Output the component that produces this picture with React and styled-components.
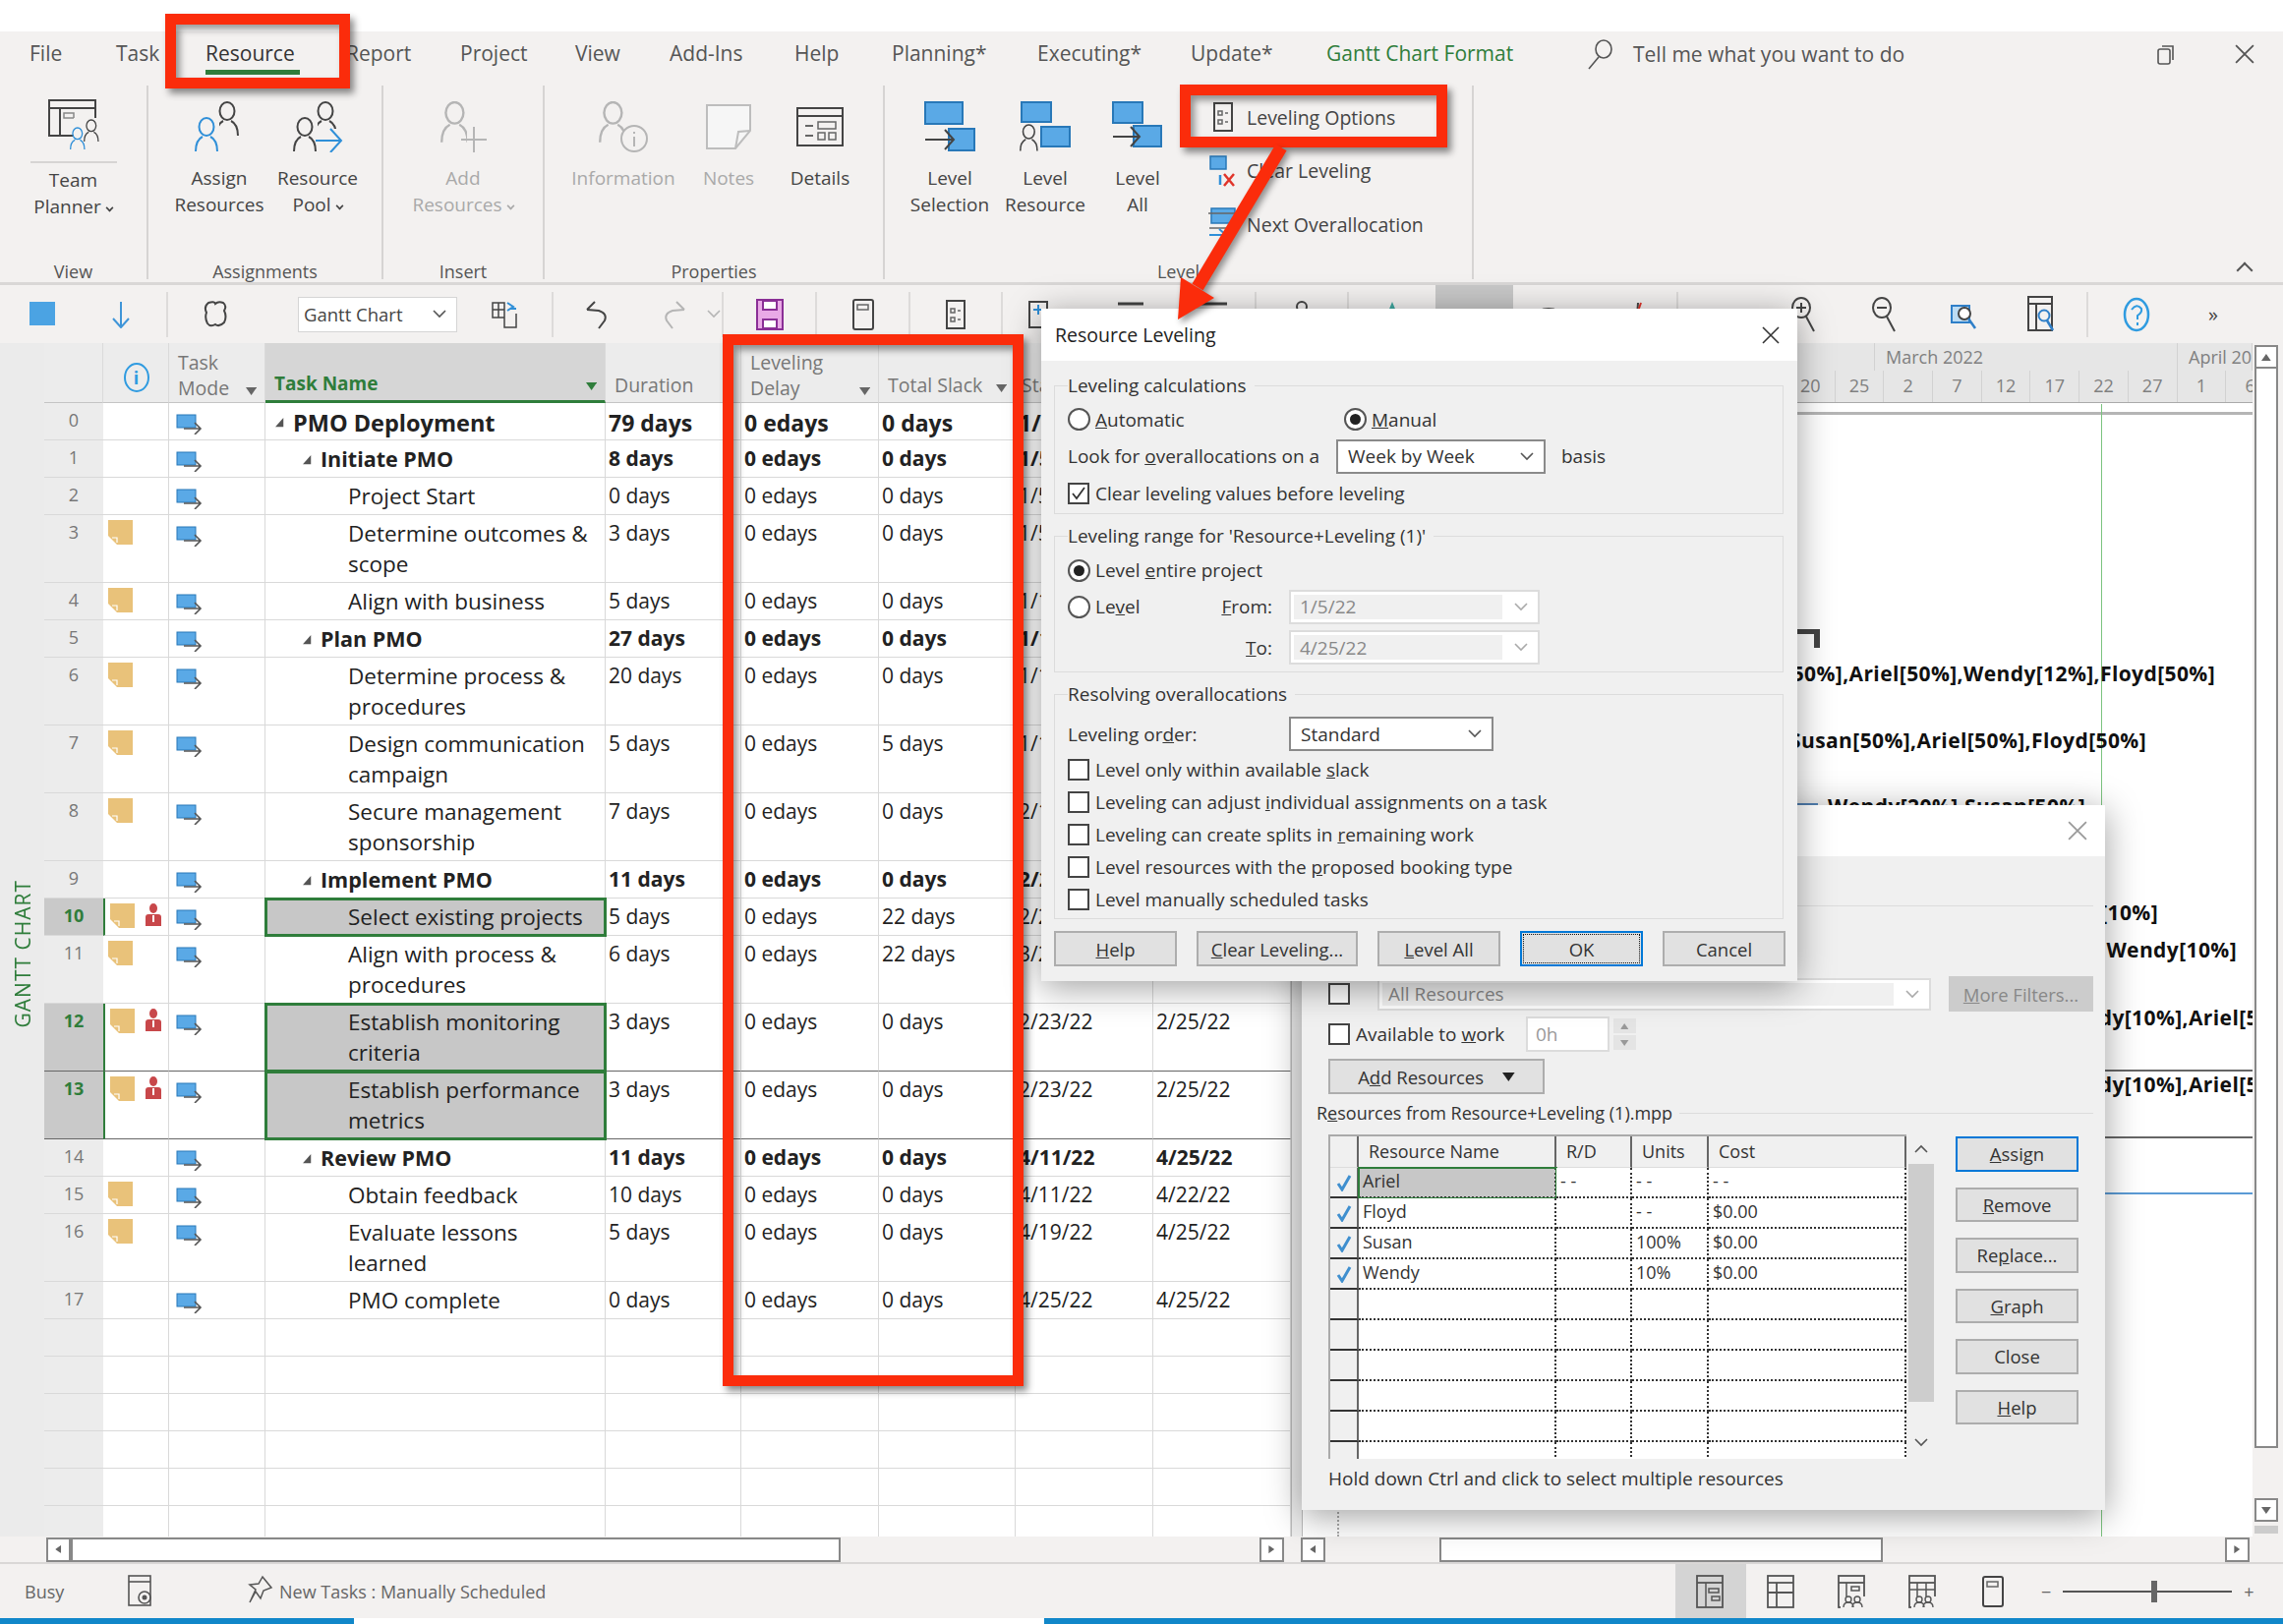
import React from 'react';
import styled, { createGlobalStyle } from 'styled-components';

const GlobalStyle = createGlobalStyle`
    html, body {
        margin: 0;
        padding: 0;
        background: #fff;
    }
    * {
        box-sizing: border-box;
    }
    body {
        font-family: 'Open Sans', 'Noto Sans', sans-serif;
        color: #444;
    }
`;

const GREEN = '#2f7d3b';
const RED = '#fb2c0b';
const BLUE = '#5aa9e6';
const LINE = '#444';

// ---------- icons ----------
const Svg = ({ w = 52, h = 52, children, box }) => (
    <svg width={w} height={h} viewBox={box || `0 0 ${w} ${h}`} fill='none' style={{ display: 'block', flex: 'none' }}>
        {children}
    </svg>
);

const Person = ({ x, y, s = 1, c = LINE, w = 2 }) => (
    <g transform={`translate(${x} ${y}) scale(${s})`} stroke={c} strokeWidth={w} fill='none'>
        <ellipse cx='12' cy='9' rx='7.5' ry='9' />
        <path d='M1 34c0-9 3-13 7-15M23 34c0-9-3-13-7-15' />
    </g>
);

const TeamPlannerIcon = () => (
    <Svg>
        <rect x='1' y='2' width='47' height='36' stroke={LINE} strokeWidth='2' />
        <path d='M1 10h47M12 10v28' stroke={LINE} strokeWidth='2' />
        <rect x='16' y='15' width='10' height='5' stroke='#888' strokeWidth='1.5' />
        <rect x='27' y='24' width='8' height='5' stroke='#888' strokeWidth='1.5' />
        <rect x='26' y='20' width='26' height='32' fill='#f3f1f0' stroke='none' />
        <Person x={36} y={22} s={0.65} />
        <Person x={22} y={30} s={0.65} c='#2f8fd8' />
    </Svg>
);

const AssignIcon = () => (
    <Svg>
        <Person x={22} y={1} />
        <rect x='0' y='14' width='26' height='38' fill='#f3f1f0' />
        <Person x={1} y={17} c='#2f8fd8' />
    </Svg>
);

const PoolIcon = () => (
    <Svg>
        <Person x={22} y={1} />
        <rect x='0' y='14' width='26' height='38' fill='#f3f1f0' />
        <Person x={1} y={17} />
        <rect x='26' y='28' width='26' height='24' fill='#f3f1f0' />
        <path d='M24 40h26M39 28l11 12-11 12' stroke='#2f8fd8' strokeWidth='2' />
    </Svg>
);

const AddResIcon = () => (
    <Svg>
        <Person x={3} y={1} s={1.2} c='#b5b5b5' />
        <rect x='30' y='28' width='20' height='24' fill='#f3f1f0' />
        <path d='M24 39h26M37 26v26' stroke='#b5b5b5' strokeWidth='2' />
    </Svg>
);

const InfoIcon = () => (
    <Svg>
        <Person x={1} y={1} s={1.2} c='#b5b5b5' />
        <circle cx='37' cy='38' r='13' fill='#f3f1f0' stroke='#b5b5b5' strokeWidth='2' />
        <path d='M37 36v10M37 31v2' stroke='#b5b5b5' strokeWidth='2' />
    </Svg>
);

const NotesIcon = () => (
    <Svg w={46} h={46}>
        <path d='M1 1h44v26L30 45H1z' fill='#f6f6f6' stroke='#bdbdbd' strokeWidth='2' />
        <path d='M30 45l3-17 12-1' stroke='#bdbdbd' strokeWidth='2' />
    </Svg>
);

const DetailsIcon = () => (
    <Svg w={48} h={40}>
        <rect x='1' y='1' width='46' height='38' stroke={LINE} strokeWidth='2' />
        <path d='M1 9h46' stroke={LINE} strokeWidth='2' />
        <path d='M9 19h8M9 29h8' stroke='#666' strokeWidth='2' />
        <rect x='22' y='15' width='18' height='7' stroke='#666' strokeWidth='1.5' />
        <rect x='22' y='26' width='7' height='7' stroke='#666' strokeWidth='1.5' />
        <rect x='33' y='26' width='7' height='7' stroke='#666' strokeWidth='1.5' />
    </Svg>
);

const LevelSelIcon = () => (
    <Svg>
        <rect x='1' y='1' width='38' height='22' fill={BLUE} stroke='#2878b8' strokeWidth='2' />
        <rect x='25' y='28' width='26' height='22' fill={BLUE} stroke='#2878b8' strokeWidth='2' />
        <path d='M1 39h28M21 29l9 10-9 10' stroke={LINE} strokeWidth='2' />
    </Svg>
);

const LevelResIcon = () => (
    <Svg>
        <rect x='2' y='1' width='30' height='20' fill={BLUE} stroke='#2878b8' strokeWidth='2' />
        <rect x='22' y='26' width='29' height='20' fill={BLUE} stroke='#2878b8' strokeWidth='2' />
        <Person x={0} y={24} s={0.78} />
    </Svg>
);

const LevelAllIcon = () => (
    <Svg>
        <rect x='1' y='1' width='30' height='21' fill={BLUE} stroke='#2878b8' strokeWidth='2' />
        <rect x='22' y='25' width='28' height='21' fill={BLUE} stroke='#2878b8' strokeWidth='2' />
        <path d='M1 36h26M19 26l9 10-9 10' stroke={LINE} strokeWidth='2' />
    </Svg>
);

const OptionsIcon = () => (
    <Svg w={22} h={30}>
        <rect x='2' y='1' width='18' height='28' stroke={LINE} strokeWidth='2' />
        <path d='M6 9h4v4H6zM6 18h4v4H6zM13 11h3M13 20h3' stroke='#666' strokeWidth='1.5' />
    </Svg>
);

const ClearIcon = () => (
    <Svg w={28} h={32}>
        <rect x='1' y='1' width='16' height='13' fill={BLUE} stroke='#2878b8' strokeWidth='1.5' />
        <path d='M11 20v10' stroke='#2f8fd8' strokeWidth='2.5' />
        <path d='M15 19l10 12M25 19L15 31' stroke='#e0342a' strokeWidth='2.5' />
    </Svg>
);

const NextIcon = () => (
    <Svg w={30} h={34}>
        <rect x='3' y='1' width='24' height='15' fill={BLUE} stroke='#2878b8' strokeWidth='1.5' />
        <path d='M0 6h30M1 21h27' stroke='#666' strokeWidth='1.5' />
        <path d='M1 28h16M11 22l7 6-7 6' stroke='#2f8fd8' strokeWidth='2' />
    </Svg>
);

const TaskModeIcon = () => (
    <Svg w={27} h={21}>
        <rect x='1' y='1' width='19' height='13' fill={BLUE} stroke='#2878b8' />
        <path d='M8 15h17M19 9l6 6-6 6' stroke='#555' strokeWidth='1.6' />
    </Svg>
);

const NoteIcon = () => (
    <Svg w={25} h={25}>
        <path d='M0 0h25v25H9L0 16z' fill='#e9c27a' />
        <path d='M4 18h5v5' stroke='#fff' strokeWidth='1.2' />
    </Svg>
);

const RedPersonIcon = () => (
    <Svg w={18} h={23}>
        <ellipse cx='9' cy='5' rx='4' ry='5' fill='#c8474a' />
        <path d='M1 23v-9q0-3 3-3h10q3 0 3 3v9z' fill='#c8474a' />
        <path d='M8 12h2v7H8z' fill='#fff' />
    </Svg>
);

const CheckMark = () => (
    <Svg w={18} h={18}>
        <path d='M3 10l4 6 8-14' stroke='#3f8fcf' strokeWidth='3' />
    </Svg>
);

const Chevron = ({ c = '#555' }) => (
    <Svg w={14} h={9}>
        <path d='M1 1l6 6 6-6' stroke={c} strokeWidth='1.6' />
    </Svg>
);

const Caret = ({ s = 8, c = '#666', dir = 0 }) => (
    <svg
        width={s * 1.4}
        height={s}
        viewBox='0 0 14 10'
        style={{ display: 'block', flex: 'none', transform: `rotate(${dir}deg)` }}
    >
        <path d='M0 0h14L7 10z' fill={c} />
    </svg>
);

const Collapse = () => (
    <svg width='11' height='11' viewBox='0 0 12 12' style={{ display: 'block', flex: 'none' }}>
        <path d='M9 0v10H0z' fill='#555' />
    </svg>
);

const ViewIcon = ({ kind }) => (
    <Svg w={30} h={34}>
        <rect x='1' y='1' width='26' height='32' stroke='#555' strokeWidth='1.8' />
        <path d='M1 8h26' stroke='#555' strokeWidth='1.8' />
        {kind === 'gantt' && <path d='M10 8v25M13 14h10v4H13zM16 22h8v4h-8z' stroke='#555' strokeWidth='1.5' />}
        {kind === 'split' && <path d='M10 8v10M1 18h26M10 18v15' stroke='#555' strokeWidth='1.8' />}
        {kind === 'team' && <path d='M9 8v14M14 12h8v4h-8z' stroke='#555' strokeWidth='1.5' />}
        {kind === 'usage' && <path d='M9 8v14M1 15h26M18 8v14' stroke='#555' strokeWidth='1.5' />}
        {(kind === 'team' || kind === 'usage') && (
            <>
                <rect x='3' y='22' width='26' height='12' fill='#f3f1f0' />
                <circle cx='11' cy='25' r='3' stroke='#555' strokeWidth='1.4' />
                <circle cx='20' cy='25' r='3' stroke='#555' strokeWidth='1.4' />
                <path d='M6 33q0-5 5-5t5 5M15 33q0-5 5-5t5 5' stroke='#555' strokeWidth='1.4' />
            </>
        )}
    </Svg>
);

const Q = {
    square: <Svg w={26} h={26}><rect width='26' height='24' fill='#4ba3e3' /></Svg>,
    down: <Svg w={22} h={28}><path d='M11 1v26M3 18l8 9 8-9' stroke='#3f95d8' strokeWidth='2' /></Svg>,
    link: <Svg w={30} h={28}><path d='M8 2q6-2 7 1 3-3 8-1 4 3 1 8 3 6 0 12-5 5-9 2-5 3-8-1-3-6-1-11-3-6 2-10z' stroke={LINE} strokeWidth='2' /></Svg>,
    split: <Svg w={28} h={28}><path d='M2 2h12v15H2zM2 9h12M8 2v15M14 17v10h12V13' stroke={LINE} strokeWidth='1.5' /><path d='M17 2l6 4-6 4M26 8h-6' stroke='#2f8fd8' strokeWidth='2' /></Svg>,
    undo: <Svg w={26} h={30}><path d='M2 10l8-8M2 10l12 1q9 3 6 10l-6 8' stroke={LINE} strokeWidth='2' /></Svg>,
    redo: <Svg w={26} h={30}><path d='M24 10l-8-8M24 10L12 11q-9 3-6 10l6 8' stroke='#b5b5b5' strokeWidth='2' /></Svg>,
    chev: <Chevron c='#b5b5b5' />,
    save: <Svg w={28} h={32}><rect x='1' y='1' width='26' height='30' fill='#e9a9e6' stroke='#8a2f96' strokeWidth='2' /><rect x='7' y='2' width='14' height='9' fill='#fff' stroke='#8a2f96' strokeWidth='2' /><rect x='7' y='21' width='14' height='9' fill='#fff' stroke='#8a2f96' strokeWidth='2' /></Svg>,
    doc: <Svg w={24} h={32}><rect x='2' y='1' width='20' height='30' rx='2' stroke={LINE} strokeWidth='2' /><rect x='6' y='6' width='11' height='5' stroke='#666' strokeWidth='1.5' /></Svg>,
    opts: <OptionsIcon />,
    plus: <Svg w={22} h={30}><rect x='2' y='2' width='18' height='26' stroke={LINE} strokeWidth='2' /><path d='M11 5v10M6 10h10' stroke='#2f8fd8' strokeWidth='2' /></Svg>,
    dash: <Svg w={26} h={28}><path d='M0 3h26' stroke={LINE} strokeWidth='3' /></Svg>,
    person: <Svg w={26} h={28}><circle cx='13' cy='6' r='5' stroke={LINE} strokeWidth='2' /></Svg>,
    tri: <Svg w={24} h={28}><path d='M12 1l5 12H7z' fill='#3fa8a0' /></Svg>,
    bar: <Svg w={34} h={28}><path d='M0 14h34' stroke='#2f7fc8' strokeWidth='4' /></Svg>,
    arc: <Svg w={28} h={28}><path d='M3 16q0-8 11-8t11 8' stroke={LINE} strokeWidth='2' /></Svg>,
    mark: <Svg w={34} h={28}><path d='M2 16q0-6 8-6h14M25 2l-1 14' stroke={LINE} strokeWidth='2' /><path d='M28 2l-5 14' stroke='#e0342a' strokeWidth='2' /></Svg>,
    dbl: <Svg w={34} h={28}><path d='M1 12h14M20 12h14' stroke='#2f7fc8' strokeWidth='4' /></Svg>,
    zin: <Svg w={26} h={38}><ellipse cx='11' cy='12' rx='9' ry='10' stroke={LINE} strokeWidth='2' /><path d='M6 12h10M11 7v10M16 21l8 15' stroke={LINE} strokeWidth='2' /></Svg>,
    zout: <Svg w={26} h={38}><ellipse cx='11' cy='12' rx='9' ry='10' stroke={LINE} strokeWidth='2' /><path d='M6 12h10M16 21l8 15' stroke={LINE} strokeWidth='2' /></Svg>,
    fit: <Svg w={28} h={32}><rect x='1' y='7' width='18' height='17' fill='#bcdcf4' stroke='#2f7fc8' strokeWidth='2' /><circle cx='14' cy='15' r='6' fill='#fff' stroke={LINE} strokeWidth='2' /><path d='M18 20l7 10' stroke='#2f7fc8' strokeWidth='2.5' /></Svg>,
    table: <Svg w={28} h={38}><rect x='1' y='1' width='24' height='34' stroke={LINE} strokeWidth='2' /><path d='M1 8h24M9 8v27' stroke={LINE} strokeWidth='2' /><circle cx='17' cy='20' r='5.5' fill='#f3f1f0' stroke='#2f7fc8' strokeWidth='2' /><path d='M20 25l6 10' stroke='#2f7fc8' strokeWidth='2.5' /></Svg>,
    help: <Svg w={28} h={36}><ellipse cx='14' cy='18' rx='12' ry='16' stroke='#2f9be0' strokeWidth='2.5' /><path d='M9 13q5-7 10-1 1 4-4 7v4M15 26v3' stroke='#2f9be0' strokeWidth='2' /></Svg>,
};

// ---------- shell ----------
const Page = styled.div`
    position: relative;
    width: 2322px;
    height: 1652px;
    overflow: hidden;
    background: #fff;
    display: flex;
    flex-direction: column;
`;

const TopBand = styled.div`
    height: 32px;
    flex: none;
`;

const TabRow = styled.div`
    height: 52px;
    flex: none;
    display: flex;
    align-items: flex-start;
    padding: 7px 0 0 30px;
    background: #f3f1f0;
    font-size: 21px;
    line-height: 30px;
    color: #555;
`;

const Tab = styled.div`
    width: ${(p) => p.$w}px;
    flex: none;
    position: relative;
    color: ${(p) => (p.$format ? GREEN : p.$active ? '#333' : '#555')};

    ${(p) =>
        p.$active &&
        `&::after {
            content: '';
            position: absolute;
            left: 0;
            top: 32px;
            width: 96px;
            height: 5px;
            background: ${GREEN};
        }`}
`;

const SearchBox = styled.div`
    display: flex;
    align-items: center;
    gap: 20px;
    width: 550px;
    flex: none;
    color: #555;
`;

const WindowBtn = styled.div`
    width: 80px;
    flex: none;
    display: flex;
    justify-content: center;
    padding-top: 6px;
`;

const Ribbon = styled.div`
    height: 206px;
    flex: none;
    display: flex;
    background: #f3f1f0;
    border-bottom: 3px solid #d9d7d6;
    padding-top: 3px;
    position: relative;
`;

const Group = styled.div`
    width: ${(p) => p.$w}px;
    flex: none;
    height: 197px;
    display: flex;
    flex-direction: column;
    border-right: 2px solid #d6d4d3;
`;

const GroupBody = styled.div`
    flex: 1;
    display: flex;
    padding-left: ${(p) => p.$pad || 0}px;
`;

const GroupLabel = styled.div`
    height: 26px;
    margin-bottom: -5px;
    text-align: center;
    font-size: 18px;
    line-height: 26px;
    color: #555;
`;

const BigButton = styled.div`
    width: ${(p) => p.$w || 100}px;
    flex: ${(p) => (p.$w ? 'none' : 1)};
    display: flex;
    flex-direction: column;
    align-items: center;
    padding-top: 12px;
    font-size: 19px;
    line-height: 27px;
    text-align: center;
    color: ${(p) => (p.$off ? '#a9a9a9' : '#444')};
    white-space: nowrap;
`;

const IconSlot = styled.div`
    height: ${(p) => p.$h || 60}px;
    margin-bottom: 9px;
    display: flex;
    align-items: center;
    justify-content: center;
    flex: none;
`;

const PlannerRule = styled.div`
    width: 88px;
    height: 2px;
    background: #d6d4d3;
    margin: 3px 0 4px;
    flex: none;
`;

const TinyCaret = styled.span`
    display: inline-block;
    margin-left: 5px;
    vertical-align: 2px;
    width: 7px;
    height: 7px;
    border-right: 2px solid currentColor;
    border-bottom: 2px solid currentColor;
    transform: rotate(45deg) scale(0.8);
`;

const SmallList = styled.div`
    display: flex;
    flex-direction: column;
    margin-left: 21px;
    padding-top: 5px;
`;

const SmallItem = styled.div`
    height: 54.5px;
    display: flex;
    align-items: center;
    gap: 9px;
    font-size: 19.5px;
    white-space: nowrap;
`;

const SmallSlot = styled.div`
    width: 30px;
    display: flex;
    justify-content: center;
    flex: none;
`;

const CollapseSlot = styled.div`
    position: absolute;
    right: 32px;
    bottom: 8px;
    width: 16px;
    height: 16px;
    &::after {
        content: '';
        position: absolute;
        left: 3px;
        top: 6px;
        width: 10px;
        height: 10px;
        border-left: 2px solid #555;
        border-top: 2px solid #555;
        transform: rotate(45deg);
    }
`;

const QatRow = styled.div`
    height: 59px;
    flex: none;
    display: flex;
    align-items: center;
    background: #f3f1f0;
    font-size: 20px;
`;

const QatSlot = styled.div`
    width: ${(p) => p.$w}px;
    height: 100%;
    flex: none;
    display: flex;
    align-items: center;
    justify-content: center;
    background: ${(p) => (p.$on ? '#c8c8c8' : 'transparent')};
`;

const QatSep = styled.div`
    width: ${(p) => p.$w}px;
    height: 46px;
    flex: none;
    border-right: 2px solid #dddbda;
`;

const ViewCombo = styled.div`
    width: 162px;
    height: 36px;
    flex: none;
    margin: 0 0 0 37px;
    background: #fff;
    border: 1px solid #d5d5d5;
    display: flex;
    align-items: center;
    justify-content: space-between;
    padding: 0 10px 0 5px;
    font-size: 18.5px;
    color: #444;
`;

// ---------- main area ----------
const Main = styled.div`
    height: 1214px;
    flex: none;
    display: flex;
    background: #fff;
`;

const ViewBar = styled.div`
    width: 45px;
    flex: none;
    background: #ebebeb;
    position: relative;
`;

const ViewBarText = styled.div`
    position: absolute;
    left: 8px;
    top: 546px;
    writing-mode: vertical-rl;
    transform: rotate(180deg);
    font-size: 21px;
    letter-spacing: 1px;
    color: ${GREEN};
    white-space: nowrap;
    line-height: 30px;
`;

const Sheet = styled.div`
    width: 1268px;
    flex: none;
    overflow: hidden;
    display: flex;
    flex-direction: column;
`;

const Row = styled.div`
    display: grid;
    grid-template-columns: 60px 67px 98px 346px 138px 140px 139px 140px 140px;
    height: ${(p) => p.$h}px;
    flex: none;
    font-size: ${(p) => (p.$big ? 23 : 21)}px;
    font-weight: ${(p) => (p.$bold ? 700 : 400)};
    line-height: 31px;
    color: #222;
`;

const Cell = styled.div`
    border-bottom: 1px solid ${(p) => (p.$dark ? '#666' : '#d9d9d9')};
    border-right: 1px solid #d9d9d9;
    padding: ${(p) => (p.$big ? 5 : 3)}px 4px 0 3px;
    white-space: nowrap;
    overflow: hidden;
    position: relative;
`;

const IdCell = styled(Cell)`
    background: ${(p) => (p.$sel ? '#c9c9c9' : '#ececec')};
    color: ${(p) => (p.$sel ? GREEN : '#777')};
    font-size: 18px;
    font-weight: ${(p) => (p.$sel ? 700 : 400)};
    text-align: center;
    padding: 0;
    line-height: 34px;
    border-right: none;
`;

const InfoCell = styled(Cell)`
    display: flex;
    gap: 10px;
    padding: 5px 0 0 5px;
    border-left: ${(p) => (p.$sel ? `2px solid ${GREEN}` : 'none')};
`;

const ModeCell = styled(Cell)`
    padding: 11px 0 0 7px;
`;

const NameCell = styled(Cell)`
    padding-left: ${(p) => 28 + p.$lvl * 28}px;
    padding-right: 10px;
    font-size: ${(p) => (p.$big ? 23.5 : p.$bold ? 21.5 : 22.5)}px;
    white-space: normal;
    overflow: visible;
    z-index: ${(p) => (p.$sel ? 2 : 0)};
    background: ${(p) => (p.$sel ? '#c7c7c7' : 'transparent')};
    outline: ${(p) => (p.$sel ? `3px solid ${GREEN}` : 'none')};
    outline-offset: -2px;
`;

const Twist = styled.span`
    position: absolute;
    left: ${(p) => 10 + p.$lvl * 28}px;
    top: 15px;
`;

const HeadRow = styled(Row)`
    height: 61px;
    font-size: 19.5px;
    line-height: 26px;
    color: #777;
`;

const HeadCell = styled.div`
    background: ${(p) => (p.$on ? '#d6d6d6' : '#ececec')};
    color: ${(p) => (p.$on ? GREEN : '#777')};
    font-weight: ${(p) => (p.$on ? 700 : 400)};
    font-size: ${(p) => (p.$on ? 19 : 19.5)}px;
    border-right: 1px solid #dadada;
    border-bottom: ${(p) => (p.$on ? `3px solid ${GREEN}` : '1px solid #c4c4c4')};
    display: flex;
    align-items: flex-end;
    justify-content: space-between;
    padding: 0 8px ${(p) => (p.$two ? 1 : 4)}px ${(p) => p.$pl || 9}px;
    white-space: nowrap;
`;

const HeadCaret = styled.span`
    padding-bottom: 6px;
`;

const InfoDot = styled.div`
    width: 26px;
    height: 30px;
    border: 2px solid #2f9be0;
    border-radius: 50%;
    color: #2f9be0;
    font-size: 18px;
    font-weight: 700;
    line-height: 26px;
    text-align: center;
    margin: 0 auto 6px;
`;

const Splitter = styled.div`
    width: 12px;
    flex: none;
    background: #ececec;
    border-left: 1px solid #bbb;
    border-right: 1px solid #bbb;
`;

const Chart = styled.div`
    width: 966px;
    flex: none;
    position: relative;
    overflow: hidden;
`;

const ScaleTop = styled.div`
    height: 28px;
    display: flex;
    background: #e6e6e6;
    font-size: 18px;
    line-height: 28px;
    color: #808080;
    white-space: nowrap;
`;

const Month = styled.div`
    width: ${(p) => p.$w}px;
    flex: none;
    padding-left: 11px;
    border-right: 1px solid #d2d2d2;
    overflow: hidden;
`;

const ScaleBottom = styled.div`
    height: 33px;
    display: flex;
    padding-left: 492px;
    background: #e6e6e6;
    border-bottom: 1px solid #aaa;
    font-size: 18px;
    line-height: 30px;
    color: #808080;
`;

const Tick = styled.div`
    width: 49.7px;
    flex: none;
    text-align: center;
    border-right: 1px solid #d2d2d2;
    border-top: none;
`;

const ScaleRule = styled.div`
    height: 12px;
    border-bottom: 3px solid #b5b5b5;
`;

const TodayLine = styled.div`
    position: absolute;
    left: 812px;
    top: 62px;
    bottom: 0;
    width: 1px;
    background: #7cc47f;
`;

const DottedLine = styled.div`
    position: absolute;
    left: 35px;
    top: 62px;
    bottom: 0;
    border-left: 2px dotted #aaa;
`;

const ChartRule = styled.div`
    position: absolute;
    left: 0;
    right: 0;
    top: ${(p) => p.$y}px;
    height: 2px;
    background: ${(p) => p.$c || '#666'};
`;

const BarLabel = styled.div`
    position: absolute;
    top: ${(p) => p.$y}px;
    ${(p) => (p.$right !== undefined ? `right: ${p.$right}px;` : `left: ${p.$left}px;`)}
    font-size: 21px;
    font-weight: 700;
    line-height: 28px;
    letter-spacing: 0.4px;
    color: #111;
    white-space: nowrap;
`;

const SummaryEnd = styled.div`
    position: absolute;
    left: 490px;
    top: 291px;
    width: 36px;
    height: 19px;
    border-top: 5px solid #444;
    border-right: 6px solid #444;
`;

const BlueStub = styled.div`
    position: absolute;
    left: 500px;
    top: 468px;
    width: 24px;
    height: 3px;
    background: #5b8fc7;
`;

const VScroll = styled.div`
    width: 31px;
    flex: none;
    padding: 2px 5px 0 2px;
    display: flex;
    flex-direction: column;
    background: #f3f1f0;
`;

const ArrowBox = styled.div`
    height: 24px;
    flex: none;
    background: #fff;
    border: 2px solid #888;
    display: flex;
    align-items: center;
    justify-content: center;
`;

const VThumb = styled.div`
    height: 1098px;
    flex: none;
    background: #fff;
    border: 2px solid #888;
    border-top: none;
    margin-bottom: 51px;
`;

const Grip = styled.div`
    height: 8px;
    margin-top: 4px;
    background: #ccc;
`;

const ScrollRow = styled.div`
    height: 28px;
    flex: none;
    display: flex;
    align-items: center;
    background: #f3f1f0;
    border-bottom: 2px solid #d9d7d6;
`;

const ScrollBar = styled.div`
    width: ${(p) => p.$w}px;
    margin-left: ${(p) => p.$ml || 0}px;
    height: 25px;
    flex: none;
    display: flex;
    align-items: stretch;
`;

const ScrollBtn = styled.div`
    width: 25px;
    flex: none;
    background: #fff;
    border: 2px solid #888;
    display: flex;
    align-items: center;
    justify-content: center;
`;

const Thumb = styled.div`
    width: ${(p) => p.$w}px;
    margin-left: ${(p) => p.$ml || 0}px;
    flex: none;
    background: #fff;
    border: 2px solid #888;
`;

const Spring = styled.div`
    flex: 1;
`;

const StatusBar = styled.div`
    height: 55px;
    flex: none;
    display: flex;
    align-items: center;
    background: #f3f1f0;
    font-size: 18px;
    color: #666;
`;

const StatusCell = styled.div`
    width: ${(p) => p.$w}px;
    height: 100%;
    flex: none;
    display: flex;
    align-items: center;
    justify-content: ${(p) => (p.$left ? 'flex-start' : 'center')};
    gap: 6px;
    padding-left: ${(p) => p.$pl || 0}px;
    background: ${(p) => (p.$on ? '#d4d4d4' : 'transparent')};
    white-space: nowrap;
`;

const ZoomTrack = styled.div`
    width: 172px;
    height: 2px;
    margin: 0 6px;
    flex: none;
    background: #555;
    position: relative;
`;

const ZoomThumb = styled.div`
    position: absolute;
    left: 90px;
    top: -10px;
    width: 6px;
    height: 22px;
    background: #666;
`;

const TaskStrip = styled.div`
    height: 6px;
    flex: none;
    background: linear-gradient(
        to right,
        #1187c9 0,
        #1187c9 360px,
        #fff 360px,
        #fff 1062px,
        #1187c9 1062px
    );
`;

// ---------- dialogs ----------
const Dialog = styled.div`
    position: absolute;
    left: ${(p) => p.$x}px;
    top: ${(p) => p.$y}px;
    width: ${(p) => p.$w}px;
    height: ${(p) => p.$h}px;
    z-index: ${(p) => p.$z};
    background: #f0f0f0;
    box-shadow: 0 6px 34px rgba(0, 0, 0, 0.38);
    display: flex;
    flex-direction: column;
    font-size: 19px;
    color: #333;
`;

const TitleBar = styled.div`
    height: ${(p) => p.$h}px;
    flex: none;
    background: #fff;
    display: flex;
    align-items: center;
    justify-content: space-between;
    padding: 0 18px 0 14px;
    font-size: 19.5px;
    color: #222;
`;

const DialogBody = styled.div`
    flex: 1;
    padding: 12px 14px 15px 13px;
    display: flex;
    flex-direction: column;
`;

const Fieldset = styled.fieldset`
    margin: 0 0 ${(p) => p.$mb}px;
    padding: ${(p) => p.$pt}px 13px 0;
    min-width: 0;
    height: ${(p) => p.$h}px;
    flex: none;
    border: 1px solid #dcdcdc;
`;

const Legend = styled.legend`
    margin-left: 0;
    padding: 0 8px 0 0;
    line-height: 26px;
`;

const Line = styled.div`
    height: ${(p) => p.$h}px;
    flex: none;
    display: flex;
    align-items: center;
    white-space: nowrap;
    margin-top: ${(p) => p.$mt || 0}px;
`;

const Radio = styled.span`
    width: 23px;
    height: 23px;
    flex: none;
    border-radius: 50%;
    border: 2px solid #555;
    background: #fff;
    margin-right: 5px;
    position: relative;
    ${(p) =>
        p.$on &&
        `&::after {
            content: '';
            position: absolute;
            left: 4px;
            top: 4px;
            width: 11px;
            height: 11px;
            border-radius: 50%;
            background: #222;
        }`}
`;

const Box = styled.span`
    width: 22px;
    height: 22px;
    flex: none;
    border: 2px solid #444;
    background: #fff;
    margin-right: 6px;
    display: flex;
    align-items: center;
    justify-content: center;
`;

const Tickmark = () => (
    <Svg w={16} h={16}>
        <path d='M2 8l4 5 8-11' stroke='#333' strokeWidth='1.8' />
    </Svg>
);

const LeftCol = styled.div`
    width: ${(p) => p.$w}px;
    flex: none;
    display: flex;
    align-items: center;
    justify-content: ${(p) => (p.$end ? 'flex-end' : 'flex-start')};
    padding-right: ${(p) => (p.$end ? 17 : 0)}px;
    padding-left: ${(p) => p.$pl || 0}px;
`;

const Select = styled.div`
    width: ${(p) => p.$w}px;
    height: ${(p) => p.$h || 35}px;
    flex: none;
    border: ${(p) => (p.$off ? '2px solid #dcdcdc' : '2px solid #8a8a8a')};
    background: #fff;
    display: flex;
    align-items: center;
    justify-content: space-between;
    padding: ${(p) => (p.$off ? '3px 10px 3px 3px' : '0 10px 0 10px')};
    color: ${(p) => (p.$off ? '#888' : '#333')};
`;

const SelectText = styled.div`
    flex: 1;
    height: 100%;
    display: flex;
    align-items: center;
    margin-right: 12px;
    padding-left: ${(p) => (p.$off ? 6 : 0)}px;
    background: ${(p) => (p.$off ? '#f0f0f0' : 'transparent')};
`;

const ButtonRow = styled.div`
    display: flex;
    gap: 20px;
    justify-content: space-between;
`;

const DlgButton = styled.div`
    width: ${(p) => p.$w || 125}px;
    height: 36px;
    flex: none;
    font-size: 18.5px;
    background: ${(p) => (p.$off ? '#ccc' : '#e1e1e1')};
    border: 2px solid ${(p) => (p.$primary ? '#0078d7' : p.$off ? '#ccc' : '#adadad')};
    display: flex;
    align-items: center;
    justify-content: center;
    color: ${(p) => (p.$off ? '#888' : '#333')};
    ${(p) => p.$focus && 'outline: 1px dotted #111; outline-offset: -4px;'}
`;

const BodyTwo = styled.div`
    flex: 1;
    padding: 50px 12px 0 27px;
    display: flex;
    flex-direction: column;
`;

const Rule = styled.div`
    height: 1px;
    background: #dcdcdc;
    flex: none;
    margin-bottom: 71px;
`;

const SpinInput = styled.div`
    width: 85px;
    height: 36px;
    flex: none;
    background: #fff;
    border: 2px solid #dcdcdc;
    padding-left: 8px;
    line-height: 32px;
    color: #999;
`;

const Spin = styled.div`
    width: 23px;
    flex: none;
    margin-left: 4px;
    display: flex;
    flex-direction: column;
    gap: 2px;
`;

const SpinPart = styled.div`
    height: 15px;
    background: #e4e4e4;
    display: flex;
    align-items: center;
    justify-content: center;
`;

const LabelRule = styled.div`
    display: flex;
    align-items: center;
    gap: 7px;
    height: 30px;
    margin: 4px 0 7px -12px;
    white-space: nowrap;
    font-size: 18px;
    &::after {
        content: '';
        flex: 1;
        height: 1px;
        background: #dcdcdc;
    }
`;

const PickerWrap = styled.div`
    display: flex;
    height: 330px;
    flex: none;
`;

const Picker = styled.div`
    width: 588px;
    flex: none;
    position: relative;
    overflow: hidden;
    border-top: 2px solid #aaa;
    border-left: 2px solid #aaa;
    font-size: 18px;
    color: #333;
`;

const PickRow = styled.div`
    display: grid;
    grid-template-columns: 29px 201px 77px 78px 201px;
    height: ${(p) => p.$h || 31}px;
`;

const PickHead = styled.div`
    background: #f0f0f0;
    border-right: 2px solid #666;
    border-bottom: 1px solid #ddd;
    display: flex;
    align-items: flex-end;
    padding: 0 0 2px 10px;
    line-height: 28px;
`;

const PickMark = styled.div`
    background: #f0f0f0;
    border-right: 2px solid #666;
    border-bottom: 2px solid #333;
    display: flex;
    align-items: center;
    justify-content: center;
`;

const PickCell = styled.div`
    background: ${(p) => (p.$on ? '#c7c7c7' : '#fff')};
    border-right: 2px dotted #333;
    border-bottom: 2px dotted #333;
    padding-left: 4px;
    line-height: 26px;
    white-space: nowrap;
    ${(p) => p.$on && `outline: 2px solid ${GREEN}; outline-offset: -1px;`}
`;

const PickScroll = styled.div`
    width: 30px;
    flex: none;
    display: flex;
    flex-direction: column;
    align-items: stretch;
    background: #f0f0f0;
    padding: 0 2px;
`;

const PickScrollEnd = styled.div`
    height: 30px;
    display: flex;
    align-items: center;
    justify-content: center;
    transform: ${(p) => (p.$up ? 'rotate(180deg)' : 'none')};
`;

const PickThumb = styled.div`
    height: 242px;
    background: #cdcdcd;
    flex: none;
    margin-bottom: 26px;
`;

const SideButtons = styled.div`
    display: flex;
    flex-direction: column;
    gap: 16px;
    margin-left: 20px;
    padding-top: 2px;
`;

const SideButton = styled(DlgButton)`
    height: 35.5px;
`;

const Hint = styled.div`
    line-height: 26px;
    margin-top: 7px;
`;

const XMark = ({ c = '#333', s = 18 }) => (
    <svg width={s} height={s} viewBox='0 0 18 18' style={{ display: 'block', flex: 'none' }}>
        <path d='M1 1l16 16M17 1L1 17' stroke={c} strokeWidth='1.6' />
    </svg>
);

// ---------- annotations ----------
const RedBox = styled.div`
    position: absolute;
    left: ${(p) => p.$x}px;
    top: ${(p) => p.$y}px;
    width: ${(p) => p.$w}px;
    height: ${(p) => p.$h}px;
    z-index: 20;
    border: 11px solid ${RED};
    box-shadow: 4px 5px 7px rgba(0, 0, 0, 0.45), inset 4px 5px 7px rgba(0, 0, 0, 0.4);
    pointer-events: none;
`;

const ArrowOverlay = styled.svg`
    position: absolute;
    left: 1180px;
    top: 140px;
    z-index: 21;
    filter: drop-shadow(3px 4px 3px rgba(0, 0, 0, 0.4));
`;

// ---------- data ----------
const TABS = [
    ['File', 88],
    ['Task', 91],
    ['Resource', 143, 'active'],
    ['Report', 116],
    ['Project', 117],
    ['View', 96],
    ['Add-Ins', 127],
    ['Help', 99],
    ['Planning*', 148],
    ['Executing*', 156],
    ['Update*', 138],
    ['Gantt Chart Format', 264, 'format'],
];

const TASKS = [
    { id: 0, lvl: 0, name: 'PMO Deployment', dur: '79 days', slack: '0 days', start: '1/5/22', bold: true, big: true, twist: true },
    { id: 1, lvl: 1, name: 'Initiate PMO', dur: '8 days', slack: '0 days', start: '1/5/22', bold: true, twist: true },
    { id: 2, lvl: 2, name: 'Project Start', dur: '0 days', slack: '0 days', start: '1/5/22' },
    { id: 3, lvl: 2, name: 'Determine outcomes & scope', dur: '3 days', slack: '0 days', start: '1/5/22', tall: true, note: true },
    { id: 4, lvl: 2, name: 'Align with business', dur: '5 days', slack: '0 days', start: '1/10/22', note: true },
    { id: 5, lvl: 1, name: 'Plan PMO', dur: '27 days', slack: '0 days', start: '1/17/22', bold: true, twist: true },
    { id: 6, lvl: 2, name: 'Determine process & procedures', dur: '20 days', slack: '0 days', start: '1/17/22', tall: true, note: true },
    { id: 7, lvl: 2, name: 'Design communication campaign', dur: '5 days', slack: '5 days', start: '1/17/22', tall: true, note: true },
    { id: 8, lvl: 2, name: 'Secure management sponsorship', dur: '7 days', slack: '0 days', start: '2/14/22', tall: true, note: true },
    { id: 9, lvl: 1, name: 'Implement PMO', dur: '11 days', slack: '0 days', start: '2/23/22', bold: true, twist: true },
    { id: 10, lvl: 2, name: 'Select existing projects', dur: '5 days', slack: '22 days', start: '2/23/22', note: true, res: true, sel: true },
    { id: 11, lvl: 2, name: 'Align with process & procedures', dur: '6 days', slack: '22 days', start: '3/2/22', tall: true, note: true },
    { id: 12, lvl: 2, name: 'Establish monitoring criteria', dur: '3 days', slack: '0 days', start: '2/23/22', end: '2/25/22', tall: true, note: true, res: true, sel: true, dark: true },
    { id: 13, lvl: 2, name: 'Establish performance metrics', dur: '3 days', slack: '0 days', start: '2/23/22', end: '2/25/22', tall: true, note: true, res: true, sel: true, dark: true },
    { id: 14, lvl: 1, name: 'Review PMO', dur: '11 days', slack: '0 days', start: '4/11/22', end: '4/25/22', bold: true, twist: true },
    { id: 15, lvl: 2, name: 'Obtain feedback', dur: '10 days', slack: '0 days', start: '4/11/22', end: '4/22/22', note: true },
    { id: 16, lvl: 2, name: 'Evaluate lessons learned', dur: '5 days', slack: '0 days', start: '4/19/22', end: '4/25/22', tall: true, note: true },
    { id: 17, lvl: 2, name: 'PMO complete', dur: '0 days', slack: '0 days', start: '4/25/22', end: '4/25/22' },
];

const QAT = [
    ['slot', 86, Q.square],
    ['slot', 74, Q.down],
    ['sep', 11],
    ['slot', 95, Q.link],
    ['combo'],
    ['slot', 96, Q.split],
    ['sep', 2],
    ['slot', 90, Q.undo],
    ['slot', 64, Q.redo],
    ['slot', 17, Q.chev],
    ['sep', 2],
    ['slot', 93, Q.save],
    ['sep', 2],
    ['slot', 93, Q.doc],
    ['sep', 2],
    ['slot', 92, Q.opts],
    ['sep', 2],
    ['slot', 72, Q.plus],
    ['slot', 116, Q.dash],
    ['slot', 54, Q.dash],
    ['sep', 16],
    ['slot', 92, Q.person],
    ['sep', 2],
    ['slot', 88, Q.tri],
    ['on', 79, Q.bar],
    ['slot', 72, Q.arc],
    ['slot', 94, Q.mark],
    ['sep', 2],
    ['slot', 96, Q.dbl],
    ['slot', 62, Q.zin],
    ['slot', 102, Q.zout],
    ['slot', 62, Q.fit],
    ['slot', 93, Q.table],
    ['sep', 2],
    ['slot', 98, Q.help],
    ['slot', 58, <span key='more'>»</span>],
];

const PEOPLE = [
    { name: 'Ariel', rd: '- -', units: '- -', cost: '- -', on: true },
    { name: 'Floyd', rd: '', units: '- -', cost: '$0.00' },
    { name: 'Susan', rd: '', units: '100%', cost: '$0.00' },
    { name: 'Wendy', rd: '', units: '10%', cost: '$0.00' },
];

const TICKS = ['20', '25', '2', '7', '12', '17', '22', '27', '1', '6'];

const Ribbons = () => (
    <Ribbon>
        <Group $w={151}>
            <GroupBody>
                <BigButton>
                    <IconSlot $h={53}><TeamPlannerIcon /></IconSlot>
                    <PlannerRule />
                    Team
                    <div>Planner<TinyCaret /></div>
                </BigButton>
            </GroupBody>
            <GroupLabel>View</GroupLabel>
        </Group>
        <Group $w={239}>
            <GroupBody $pad={22}>
                <BigButton $w={100}>
                    <IconSlot><AssignIcon /></IconSlot>
                    Assign
                    <div>Resources</div>
                </BigButton>
                <BigButton $w={100}>
                    <IconSlot><PoolIcon /></IconSlot>
                    Resource
                    <div>Pool<TinyCaret /></div>
                </BigButton>
            </GroupBody>
            <GroupLabel>Assignments</GroupLabel>
        </Group>
        <Group $w={164}>
            <GroupBody>
                <BigButton $off>
                    <IconSlot><AddResIcon /></IconSlot>
                    Add
                    <div>Resources<TinyCaret /></div>
                </BigButton>
            </GroupBody>
            <GroupLabel>Insert</GroupLabel>
        </Group>
        <Group $w={346}>
            <GroupBody $pad={20}>
                <BigButton $w={120} $off>
                    <IconSlot><InfoIcon /></IconSlot>
                    Information
                </BigButton>
                <BigButton $w={94} $off>
                    <IconSlot><NotesIcon /></IconSlot>
                    Notes
                </BigButton>
                <BigButton $w={92}>
                    <IconSlot><DetailsIcon /></IconSlot>
                    Details
                </BigButton>
            </GroupBody>
            <GroupLabel>Properties</GroupLabel>
        </Group>
        <Group $w={599}>
            <GroupBody $pad={12}>
                <BigButton $w={108}>
                    <IconSlot><LevelSelIcon /></IconSlot>
                    Level
                    <div>Selection</div>
                </BigButton>
                <BigButton $w={86}>
                    <IconSlot><LevelResIcon /></IconSlot>
                    Level
                    <div>Resource</div>
                </BigButton>
                <BigButton $w={102}>
                    <IconSlot><LevelAllIcon /></IconSlot>
                    Level
                    <div>All</div>
                </BigButton>
                <SmallList>
                    <SmallItem><SmallSlot><OptionsIcon /></SmallSlot>Leveling Options</SmallItem>
                    <SmallItem><SmallSlot><ClearIcon /></SmallSlot>Clear Leveling</SmallItem>
                    <SmallItem><SmallSlot><NextIcon /></SmallSlot>Next Overallocation</SmallItem>
                </SmallList>
            </GroupBody>
            <GroupLabel>Level</GroupLabel>
        </Group>
        <CollapseSlot />
    </Ribbon>
);

const TaskRow = ({ t }) => (
    <Row $h={t.tall ? 69 : 38} $bold={t.bold} $big={t.big}>
        <IdCell $sel={t.sel} $dark={t.dark}>{t.id}</IdCell>
        <InfoCell $sel={t.sel} $dark={t.dark}>
            {t.note && <NoteIcon />}
            {t.res && <RedPersonIcon />}
        </InfoCell>
        <ModeCell $dark={t.dark}><TaskModeIcon /></ModeCell>
        <NameCell $lvl={t.lvl} $sel={t.sel} $dark={t.dark} $big={t.big} $bold={t.bold}>
            {t.twist && <Twist $lvl={t.lvl}><Collapse /></Twist>}
            {t.name}
        </NameCell>
        <Cell $dark={t.dark} $big={t.big}>{t.dur}</Cell>
        <Cell $dark={t.dark} $big={t.big}>0 edays</Cell>
        <Cell $dark={t.dark} $big={t.big}>{t.slack}</Cell>
        <Cell $dark={t.dark} $big={t.big}>{t.start}</Cell>
        <Cell $dark={t.dark} $big={t.big}>{t.end}</Cell>
    </Row>
);

const BlankRow = ({ h = 38 }) => (
    <Row $h={h}>
        <IdCell />
        <Cell />
        <Cell />
        <Cell />
        <Cell />
        <Cell />
        <Cell />
        <Cell />
        <Cell />
    </Row>
);

const SheetView = () => (
    <Sheet>
        <HeadRow $h={61}>
            <HeadCell />
            <HeadCell><InfoDot>i</InfoDot></HeadCell>
            <HeadCell $two>
                <div>Task<br />Mode</div>
                <HeadCaret><Caret /></HeadCaret>
            </HeadCell>
            <HeadCell $on>
                Task Name
                <HeadCaret><Caret c={GREEN} /></HeadCaret>
            </HeadCell>
            <HeadCell>Duration</HeadCell>
            <HeadCell $two>
                <div>Leveling<br />Delay</div>
                <HeadCaret><Caret /></HeadCaret>
            </HeadCell>
            <HeadCell>
                Total Slack
                <HeadCaret><Caret /></HeadCaret>
            </HeadCell>
            <HeadCell $pl={6}>Start</HeadCell>
            <HeadCell $pl={6}>Finish</HeadCell>
        </HeadRow>
        {TASKS.map((t) => (
            <TaskRow key={t.id} t={t} />
        ))}
        <BlankRow />
        <BlankRow />
        <BlankRow />
        <BlankRow />
        <BlankRow />
        <BlankRow h={36} />
    </Sheet>
);

const ChartView = () => (
    <Chart>
        <ScaleTop>
            <Month $w={582} />
            <Month $w={308}>March 2022</Month>
            <Month $w={76}>April 2022</Month>
        </ScaleTop>
        <ScaleBottom>
            {TICKS.map((n, i) => (
                <Tick key={i}>{n}</Tick>
            ))}
        </ScaleBottom>
        <ScaleRule />
        <TodayLine />
        <DottedLine />
        <SummaryEnd />
        <BlueStub />
        <ChartRule $y={739} />
        <ChartRule $y={807} />
        <ChartRule $y={864} $c='#5b9bd5' />
        <BarLabel $right={38} $y={322}>Susan[50%],Ariel[50%],Wendy[12%],Floyd[50%]</BarLabel>
        <BarLabel $right={108} $y={390}>Susan[50%],Ariel[50%],Floyd[50%]</BarLabel>
        <BarLabel $left={534} $y={457}>Wendy[20%],Susan[50%]</BarLabel>
        <BarLabel $right={96} $y={565}>Wendy[10%]</BarLabel>
        <BarLabel $right={16} $y={603}>Wendy[10%]</BarLabel>
        <BarLabel $left={762} $y={672}>Wendy[10%],Ariel[50%],Floyd[50%]</BarLabel>
        <BarLabel $left={762} $y={740}>Wendy[10%],Ariel[50%],Floyd[50%]</BarLabel>
    </Chart>
);

const LevelingDialog = () => (
    <Dialog $x={1059} $y={314} $w={769} $h={684} $z={12}>
        <TitleBar $h={53}>
            Resource Leveling
            <XMark />
        </TitleBar>
        <DialogBody>
            <Fieldset $h={144} $pt={3} $mb={9}>
                <Legend>Leveling calculations</Legend>
                <Line $h={37.5}>
                    <LeftCol $w={281}><Radio /><span><u>A</u>utomatic</span></LeftCol>
                    <Radio $on /><span><u>M</u>anual</span>
                </Line>
                <Line $h={37.5}>
                    <LeftCol $w={273}><span>Look for <u>o</u>verallocations on a</span></LeftCol>
                    <Select $w={213}><SelectText>Week by Week</SelectText><Chevron /></Select>
                    <LeftCol $w={100} $pl={16}>basis</LeftCol>
                </Line>
                <Line $h={37.5}>
                    <Box><Tickmark /></Box>
                    <span>Clear leveling values before leveling</span>
                </Line>
            </Fieldset>
            <Fieldset $h={152} $pt={4} $mb={9}>
                <Legend>Leveling range for 'Resource+Leveling (1)'</Legend>
                <Line $h={36}>
                    <Radio $on /><span>Level <u>e</u>ntire project</span>
                </Line>
                <Line $h={34} $mt={2}>
                    <LeftCol $w={100}><Radio /><span>Le<u>v</u>el</span></LeftCol>
                    <LeftCol $w={125} $end><span><u>F</u>rom:</span></LeftCol>
                    <Select $w={255} $off><SelectText $off>1/5/22</SelectText><Chevron c='#aaa' /></Select>
                </Line>
                <Line $h={35} $mt={7}>
                    <LeftCol $w={225} $end><span><u>T</u>o:</span></LeftCol>
                    <Select $w={255} $off><SelectText $off>4/25/22</SelectText><Chevron c='#aaa' /></Select>
                </Line>
            </Fieldset>
            <Fieldset $h={242} $pt={10} $mb={12}>
                <Legend>Resolving overallocations</Legend>
                <Line $h={35}>
                    <LeftCol $w={225}><span>Leveling or<u>d</u>er:</span></LeftCol>
                    <Select $w={208}><SelectText>Standard</SelectText><Chevron /></Select>
                </Line>
                <Line $h={33} $mt={2}><Box /><span>Level only within available <u>s</u>lack</span></Line>
                <Line $h={33}><Box /><span>Leveling can adjust <u>i</u>ndividual assignments on a task</span></Line>
                <Line $h={33}><Box /><span>Leveling can create splits in <u>r</u>emaining work</span></Line>
                <Line $h={33}><Box /><span>Level resources with the <u>p</u>roposed booking type</span></Line>
                <Line $h={33}><Box /><span>Level manually scheduled tasks</span></Line>
            </Fieldset>
            <ButtonRow>
                <DlgButton><span><u>H</u>elp</span></DlgButton>
                <DlgButton $w={164}><span><u>C</u>lear Leveling...</span></DlgButton>
                <DlgButton><span><u>L</u>evel All</span></DlgButton>
                <DlgButton $primary $focus>OK</DlgButton>
                <DlgButton>Cancel</DlgButton>
            </ButtonRow>
        </DialogBody>
    </Dialog>
);

const AssignDialog = () => (
    <Dialog $x={1324} $y={819} $w={817} $h={717} $z={10}>
        <TitleBar $h={52}>
            <span />
            <XMark c='#9a9a9a' s={20} />
        </TitleBar>
        <BodyTwo>
            <Rule />
            <Line $h={36}>
                <LeftCol $w={50}><Box /></LeftCol>
                <Select $w={563} $h={33} $off>
                    <SelectText $off>All Resources</SelectText>
                    <Chevron c='#aaa' />
                </Select>
                <Spring />
                <DlgButton $w={147} $off><span><u>M</u>ore Filters...</span></DlgButton>
            </Line>
            <Line $h={36} $mt={5}>
                <LeftCol $w={201}>
                    <Box />
                    <span>Available to <u>w</u>ork</span>
                </LeftCol>
                <SpinInput>0h</SpinInput>
                <Spin>
                    <SpinPart><Caret s={6} c='#999' dir={180} /></SpinPart>
                    <SpinPart><Caret s={6} c='#999' /></SpinPart>
                </Spin>
            </Line>
            <Line $h={36} $mt={7}>
                <DlgButton $w={220}>
                    <span>A<u>d</u>d Resources</span>
                    &nbsp;&nbsp;&nbsp;&nbsp;
                    <Caret s={9} c='#222' />
                </DlgButton>
            </Line>
            <LabelRule><span>R<u>e</u>sources from Resource+Leveling (1).mpp</span></LabelRule>
            <PickerWrap>
                <Picker>
                    <PickRow $h={32}>
                        <PickHead />
                        <PickHead>Resource Name</PickHead>
                        <PickHead>R/D</PickHead>
                        <PickHead>Units</PickHead>
                        <PickHead>Cost</PickHead>
                    </PickRow>
                    {PEOPLE.map((r) => (
                        <PickRow key={r.name}>
                            <PickMark><CheckMark /></PickMark>
                            <PickCell $on={r.on}>{r.name}</PickCell>
                            <PickCell>{r.rd}</PickCell>
                            <PickCell>{r.units}</PickCell>
                            <PickCell>{r.cost}</PickCell>
                        </PickRow>
                    ))}
                    {[0, 1, 2, 3, 4, 5].map((i) => (
                        <PickRow key={i}>
                            <PickMark />
                            <PickCell />
                            <PickCell />
                            <PickCell />
                            <PickCell />
                        </PickRow>
                    ))}
                </Picker>
                <PickScroll>
                    <PickScrollEnd $up><Chevron /></PickScrollEnd>
                    <PickThumb />
                    <PickScrollEnd><Chevron /></PickScrollEnd>
                </PickScroll>
                <SideButtons>
                    <SideButton $primary><span><u>A</u>ssign</span></SideButton>
                    <SideButton><span><u>R</u>emove</span></SideButton>
                    <SideButton><span>Re<u>p</u>lace...</span></SideButton>
                    <SideButton><span><u>G</u>raph</span></SideButton>
                    <SideButton>Close</SideButton>
                    <SideButton><span><u>H</u>elp</span></SideButton>
                </SideButtons>
            </PickerWrap>
            <Hint>Hold down Ctrl and click to select multiple resources</Hint>
        </BodyTwo>
    </Dialog>
);

const Arrow = () => (
    <ArrowOverlay width='140' height='200' viewBox='0 0 140 200'>
        <path d='M123 10L38 152' stroke={RED} strokeWidth='13' />
        <path d='M18 185L55 163 21 142z' fill={RED} />
    </ArrowOverlay>
);

const App = () => (
    <Page>
        <GlobalStyle />
        <TopBand />
        <TabRow>
            {TABS.map(([label, w, kind]) => (
                <Tab key={label} $w={w} $active={kind === 'active'} $format={kind === 'format'}>
                    {label}
                </Tab>
            ))}
            <SearchBox>
                <Svg w={28} h={32}>
                    <ellipse cx='18' cy='11' rx='8' ry='9' stroke='#555' strokeWidth='1.6' />
                    <path d='M13 19L3 31' stroke='#555' strokeWidth='1.6' />
                </Svg>
                Tell me what you want to do
            </SearchBox>
            <WindowBtn>
                <Svg w={18} h={22}>
                    <rect x='1' y='5' width='12' height='15' rx='2' stroke='#555' strokeWidth='1.6' />
                    <path d='M5 2h11v14' stroke='#555' strokeWidth='1.6' />
                </Svg>
            </WindowBtn>
            <WindowBtn><XMark c='#555' s={20} /></WindowBtn>
        </TabRow>
        <Ribbons />
        <QatRow>
            {QAT.map(([kind, w, icon], i) =>
                kind === 'combo' ? (
                    <ViewCombo key={i}>Gantt Chart<Chevron /></ViewCombo>
                ) : kind === 'sep' ? (
                    <QatSep key={i} $w={w} />
                ) : (
                    <QatSlot key={i} $w={w} $on={kind === 'on'}>{icon}</QatSlot>
                )
            )}
        </QatRow>
        <Main>
            <ViewBar><ViewBarText>GANTT CHART</ViewBarText></ViewBar>
            <SheetView />
            <Splitter />
            <ChartView />
            <VScroll>
                <ArrowBox><Caret s={7} dir={180} /></ArrowBox>
                <VThumb />
                <ArrowBox><Caret s={7} /></ArrowBox>
                <Grip />
            </VScroll>
        </Main>
        <ScrollRow>
            <ScrollBar $w={1259} $ml={47}>
                <ScrollBtn><Caret s={6} dir={90} /></ScrollBtn>
                <Thumb $w={783} />
                <Spring />
                <ScrollBtn><Caret s={6} dir={-90} /></ScrollBtn>
            </ScrollBar>
            <ScrollBar $w={965} $ml={17}>
                <ScrollBtn><Caret s={6} dir={90} /></ScrollBtn>
                <Thumb $w={451} $ml={116} />
                <Spring />
                <ScrollBtn><Caret s={6} dir={-90} /></ScrollBtn>
            </ScrollBar>
        </ScrollRow>
        <StatusBar>
            <StatusCell $w={110} $left $pl={25}>Busy</StatusCell>
            <StatusCell $w={66}>
                <Svg w={28} h={36}>
                    <rect x='2' y='2' width='22' height='30' stroke='#555' strokeWidth='1.6' />
                    <path d='M2 8h22' stroke='#555' strokeWidth='1.6' />
                    <circle cx='18' cy='24' r='6' stroke='#555' strokeWidth='1.6' />
                    <circle cx='18' cy='24' r='2.5' fill='#555' />
                </Svg>
            </StatusCell>
            <StatusCell $w={1528} $left $pl={76}>
                <Svg w={26} h={34}>
                    <path d='M15 2l9 11-8 3-3 8-5-7-6 11 6-13-6-5 9-1z' stroke='#555' strokeWidth='1.5' />
                </Svg>
                New Tasks : Manually Scheduled
            </StatusCell>
            <StatusCell $w={72} $on><ViewIcon kind='gantt' /></StatusCell>
            <StatusCell $w={72}><ViewIcon kind='split' /></StatusCell>
            <StatusCell $w={72}><ViewIcon kind='team' /></StatusCell>
            <StatusCell $w={72}><ViewIcon kind='usage' /></StatusCell>
            <StatusCell $w={70}>{Q.doc}</StatusCell>
            <StatusCell $w={220} $left $pl={14}>
                −
                <ZoomTrack><ZoomThumb /></ZoomTrack>
                +
            </StatusCell>
        </StatusBar>
        <TaskStrip />
        <AssignDialog />
        <LevelingDialog />
        <RedBox $x={168} $y={14} $w={188} $h={76} />
        <RedBox $x={1200} $y={86} $w={272} $h={64} />
        <RedBox $x={735} $y={340} $w={306} $h={1070} />
        <Arrow />
    </Page>
);

export default App;
